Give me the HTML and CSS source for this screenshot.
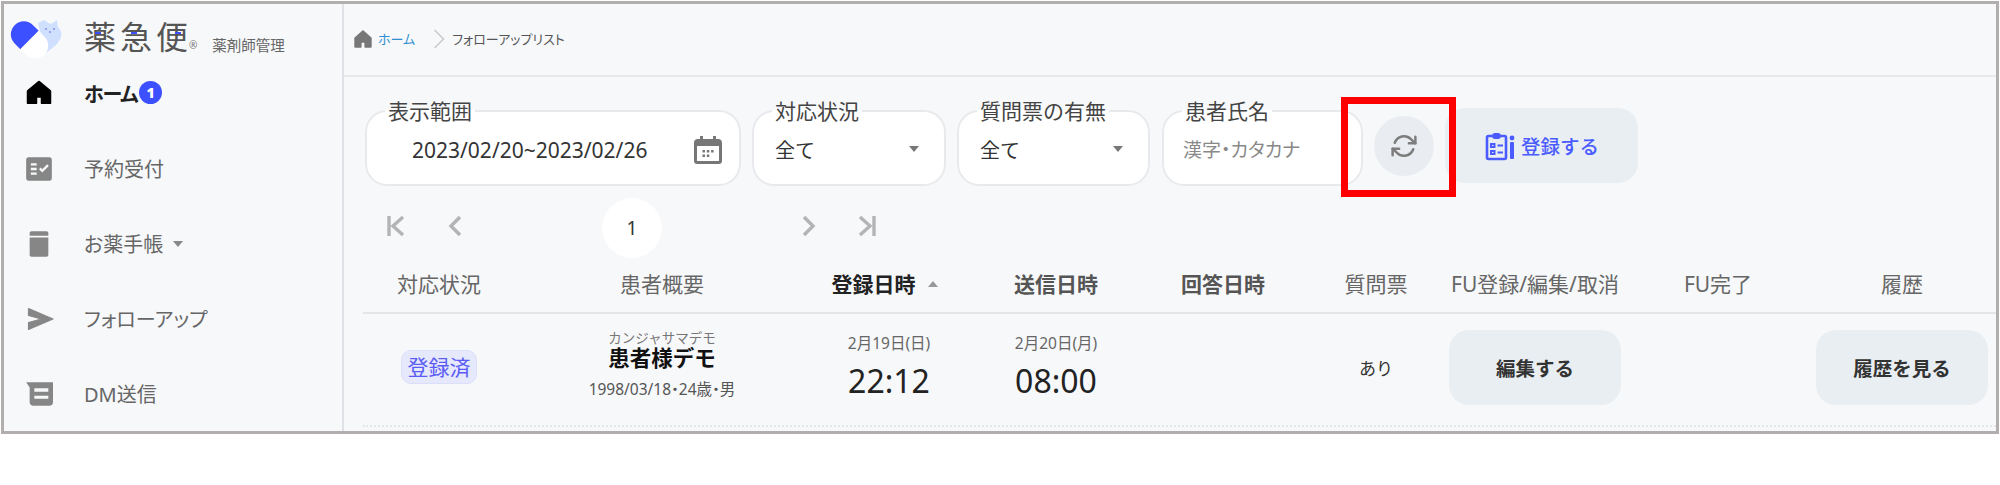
FILE: index.html
```html
<!DOCTYPE html>
<html lang="ja">
<head>
  <meta charset="UTF-8">
  <title>フォローアップリスト</title>
  <link rel="stylesheet" href="styles.css">
</head>
<body>
<div class="frame">

  <aside class="sidebar">
    <div class="brand">
      <svg class="brand-mark" width="56" height="44" viewBox="8 17 56 44">
        <path d="M44 20l5 3.500h3l5-3.500 1 7c3 3 4 6 3 10-2 6-8 11-15 16l-8-30z" fill="#cfdffe"/>
        <circle cx="46" cy="29" r="1" fill="#7f95f5"/>
        <circle cx="54" cy="29" r="1" fill="#7f95f5"/>
        <circle cx="50" cy="32" r="1" fill="#7f95f5"/>
        <g transform="rotate(45 29.500 40)">
          <path d="M29.500 27H21.500a13 13 0 0 0 0 26H29.500z" fill="#3d50ff"/>
          <path d="M29.500 27H37.500a13 13 0 0 1 0 26H29.500z" fill="#fff"/>
        </g>
      </svg>
      <span class="brand-name">薬急便<i class="reg">®</i><i class="dash dash-1"></i><i class="dash dash-2"></i><i class="dash dash-3"></i></span>
      <span class="brand-sub">薬剤師管理</span>
    </div>

    <a class="nav-item active">
      <svg class="nav-icon" viewBox="0 0 24 24"><path d="M12 2.500 2.500 10.500v10h7v-5.500h5v5.500h7v-10z" fill="#000" stroke="#000" stroke-width="2" stroke-linejoin="round"/></svg>
      <span>ホーム</span><b class="badge">1</b>
    </a>
    <a class="nav-item">
      <svg class="nav-icon" viewBox="0 0 24 24"><path fill-rule="evenodd" d="M21 2H3C1.900 2 1 2.900 1 4v16c0 1.100.9 2 2 2h18c1.100 0 2-.9 2-2V4c0-1.100-.9-2-2-2zM10 17H5v-2h5v2zm0-4H5v-2h5v2zm0-4H5V7h5v2zm4.820 6L12 12.160l1.410-1.410 1.410 1.420L18.990 8l1.420 1.420L14.820 15z" fill="#868686"/></svg>
      <span>予約受付</span>
    </a>
    <a class="nav-item">
      <svg class="nav-icon" viewBox="0 0 24 24"><path fill-rule="evenodd" d="M5.500 1h13c.8 0 1.500.7 1.500 1.500v19c0 .8-.7 1.500-1.500 1.500h-13c-.8 0-1.500-.7-1.500-1.500v-19C4 1.700 4.700 1 5.500 1zM4 5v1.500h16V5z" fill="#868686"/></svg>
      <span>お薬手帳</span><i class="nav-caret"></i>
    </a>
    <a class="nav-item">
      <svg class="nav-icon" viewBox="0 0 24 24"><path d="M3 3 24 12 3 21v-6l11-3-11-3z" fill="#868686" stroke="#868686" stroke-linejoin="round"/></svg>
      <span>フォローアップ</span>
    </a>
    <a class="nav-item">
      <svg class="nav-icon" viewBox="0 0 24 24"><path fill-rule="evenodd" d="M1 2h23v17c0 1.700-1.300 3-3 3H7c-1.700 0-3-1.300-3-3V6.500zM8 7v3h12V7zm0 6.500V16h12v-2.500z" fill="#868686"/></svg>
      <span>DM送信</span>
    </a>
  </aside>

  <main class="main">
    <div class="crumbs">
      <svg class="crumb-home" viewBox="0 0 24 24"><path d="M12 3.500 3.500 11v9.500h6v-5.500h5v5.500h6V11z" fill="#777" stroke="#777" stroke-width="2" stroke-linejoin="round"/></svg>
      <span class="crumb-link">ホーム</span>
      <svg class="crumb-sep" viewBox="0 0 12 22"><path d="M1.500 2 10.500 11 1.500 20" fill="none" stroke="#c9c9c9" stroke-width="1.500"/></svg>
      <span class="crumb-now">フォローアップリスト</span>
    </div>

    <div class="filters">
      <fieldset class="field field-date">
        <legend>表示範囲</legend>
        <div class="field-body">
          <span class="date-value">2023/02/20~2023/02/26</span>
          <svg class="cal-icon" viewBox="0 0 28 28"><path fill-rule="evenodd" d="M6 0h3v3h10V0h3v3h2.500C26.400 3 28 4.600 28 6.500V25c0 1.700-1.300 3-3 3H3c-1.700 0-3-1.300-3-3V6.500C0 4.600 1.600 3 3.500 3H6zM3 10v15h22V10z" fill="#777"/><path d="M8.500 14h2.500v2.500H8.500zm4.300 0h2.500v2.500h-2.500zm4.300 0h2.500v2.500h-2.500zm-8.600 4.500h2.500V21H8.500zm4.300 0h2.500V21h-2.500z" fill="#777"/></svg>
        </div>
      </fieldset>
      <fieldset class="field field-status">
        <legend>対応状況</legend>
        <div class="field-body"><span>全て</span><i class="select-caret"></i></div>
      </fieldset>
      <fieldset class="field field-question">
        <legend>質問票の有無</legend>
        <div class="field-body"><span>全て</span><i class="select-caret"></i></div>
      </fieldset>
      <fieldset class="field field-name">
        <legend>患者氏名</legend>
        <div class="field-body"><span class="placeholder">漢字・カタカナ</span></div>
      </fieldset>

      <button class="refresh">
        <svg width="26" height="26" viewBox="0 0 24 24" fill="none" stroke="#7d7d7d" stroke-width="2.300" stroke-linecap="round" stroke-linejoin="round"><path d="M22.500 3.500v6h-6"/><path d="M1.500 20.500v-6h6"/><path d="M3.500 9a9 9 0 0 1 14.900-3.400l4.100 3.900"/><path d="M1.500 14.500l4.100 3.900A9 9 0 0 0 20.500 15"/></svg>
        <span class="highlight"></span>
      </button>

      <button class="register">
        <svg width="30" height="30" viewBox="0 0 30 30" fill="none" stroke="#4a5cff" stroke-width="2.600"><path d="M7 5H3.500C2.500 5 2 5.500 2 6.500v20c0 1 .5 1.500 1.500 1.500h16c1 0 1.500-.5 1.500-1.500v-20c0-1-.5-1.500-1.500-1.500H16"/><rect x="7" y="2" width="9" height="6" rx="3" fill="#4a5cff" stroke="none"/><path d="M6 13h3.500v3H6zM6 20h3.500v3H6zM12.500 14.500H18M12.500 21.500H18" stroke-width="2"/><circle cx="27" cy="7" r="2.400" fill="#4a5cff" stroke="none"/><rect x="25" y="11" width="4" height="17" rx="1" fill="#4a5cff" stroke="none"/></svg>
        <span>登録する</span>
      </button>
    </div>

    <div class="pager">
      <svg class="pg pg-first" viewBox="0 0 18 22"><path d="M2 1v20M16 2 6 11l10 9" fill="none" stroke="#b4b4b4" stroke-width="3.400"/></svg>
      <svg class="pg pg-prev" viewBox="0 0 14 22"><path d="M12 2 3 11l9 9" fill="none" stroke="#b4b4b4" stroke-width="3.400"/></svg>
      <span class="pg-num">1</span>
      <svg class="pg pg-next" viewBox="0 0 14 22"><path d="M2 2l9 9-9 9" fill="none" stroke="#b4b4b4" stroke-width="3.400"/></svg>
      <svg class="pg pg-last" viewBox="0 0 18 22"><path d="M16 1v20M2 2l10 9-10 9" fill="none" stroke="#b4b4b4" stroke-width="3.400"/></svg>
    </div>

    <div class="table">
      <div class="row head">
        <div>対応状況</div>
        <div>患者概要</div>
        <div class="sorted">登録日時<i class="sort-caret"></i></div>
        <div class="strong">送信日時</div>
        <div class="strong">回答日時</div>
        <div>質問票</div>
        <div>FU登録/編集/取消</div>
        <div>FU完了</div>
        <div class="last">履歴</div>
      </div>
      <div class="row body">
        <div><span class="chip">登録済</span></div>
        <div class="patient">
          <span class="kana">カンジャサマデモ</span>
          <span class="pname">患者様デモ</span>
          <span class="dob">1998/03/18・24歳・男</span>
        </div>
        <div class="stamp"><span class="day">2月19日(日)</span><span class="time">22:12</span></div>
        <div class="stamp"><span class="day">2月20日(月)</span><span class="time">08:00</span></div>
        <div></div>
        <div class="has-q">あり</div>
        <div><button class="btn">編集する</button></div>
        <div></div>
        <div class="last"><button class="btn">履歴を見る</button></div>
      </div>
    </div>
  </main>

</div>
</body>
</html>
```

FILE: styles.css
```css
* {
  box-sizing: border-box;
}
body {
  margin: 0;
  background: #fff;
  font-family: "Noto Sans", "Noto Sans CJK JP", sans-serif;
  color: #333;
}
button {
  font-family: inherit;
  border: none;
  cursor: pointer;
}
.frame {
  display: flex;
  width: 1998px;
  height: 433px;
  margin: 1px;
  border: 3px solid #b3aeae;
  background: #f7f8fa;
  overflow: hidden;
}

/* sidebar */
.sidebar {
  flex: none;
  width: 340px;
  border-right: 2px solid #dfe1e6;
}
.brand {
  display: flex;
  align-items: flex-start;
  height: 52px;
  padding: 13px 0 0 4px;
}
.brand-mark {
  flex: none;
  margin-right: 20px;
}
.brand-name {
  position: relative;
  font-size: 32px;
  line-height: 40px;
  letter-spacing: 4px;
  color: #555;
  font-weight: 400;
  white-space: nowrap;
}
.reg {
  font-size: 10px;
  font-style: normal;
  letter-spacing: 0;
  margin-left: -3px;
  color: #777;
}
.dash {
  position: absolute;
  top: 15px;
  width: 6px;
  height: 2px;
  background: #3d50ff;
}
.dash-1 {
  left: 11px;
}
.dash-2 {
  left: 47px;
}
.dash-3 {
  left: 91px;
}
.brand-sub {
  font-size: 14.500px;
  line-height: 20px;
  margin: 18px 0 0 15px;
  color: #666;
}
.nav-item {
  display: flex;
  align-items: center;
  height: 75px;
  padding-left: 20px;
  font-size: 20px;
  font-feature-settings: "palt";
  color: #666;
}
.nav-item.active {
  color: #222;
  font-weight: 700;
  letter-spacing: -1.300px;
}
.nav-icon {
  flex: none;
  width: 30px;
  height: 28px;
  margin-right: 30px;
}
.active .nav-icon {
  margin-top: -2px;
}
.badge {
  width: 23px;
  height: 23px;
  margin: -3px 0 0 2px;
  border-radius: 50%;
  background: #3d50ff;
  color: #fff;
  font-size: 14px;
  line-height: 23px;
  text-align: center;
  letter-spacing: 0;
}
.nav-caret {
  margin-left: 10px;
  border: 5px solid transparent;
  border-top: 6px solid #888;
  border-bottom: none;
}

/* main */
.main {
  flex: 1;
  min-width: 0;
  padding-left: 19px;
}
.crumbs {
  display: flex;
  align-items: center;
  height: 73px;
  margin-left: -19px;
  padding: 0 0 2px 8px;
  border-bottom: 2px solid #e6e8ec;
  font-size: 13px;
  font-feature-settings: "palt";
}
.crumb-home {
  width: 22px;
  height: 22px;
  margin-right: 4px;
}
.crumb-link {
  color: #2f8fd0;
}
.crumb-sep {
  width: 12px;
  height: 22px;
  margin: 0 7px 0 18px;
}
.crumb-now {
  color: #555;
}

/* filters */
.filters {
  display: flex;
  align-items: flex-start;
  gap: 11px;
  margin: 22px 0 0 2px;
}
.field {
  height: 87px;
  margin: 0;
  padding: 0 27px 0 21px;
  border: 2px solid #e8e9ec;
  border-radius: 22px;
  background: #fff;
  min-width: 0;
}
.field legend {
  margin-left: -3px;
  padding: 0 3px;
  font-size: 21px;
  line-height: 24px;
  color: #444;
}
.field-date {
  width: 376px;
}
.field-status {
  width: 194px;
}
.field-question {
  width: 193px;
}
.field-name {
  width: 201px;
  margin-left: 1px;
}
.field-body {
  display: flex;
  align-items: center;
  justify-content: space-between;
  height: 52px;
  font-size: 20px;
  color: #333;
}
.date-value {
  margin: 2px 0 0 24px;
  font-size: 21px;
}
.cal-icon {
  width: 28px;
  height: 28px;
  margin: 2px -10px 0 0;
}
.select-caret {
  margin-right: -2px;
  border: 5px solid transparent;
  border-top: 6px solid #777;
  border-bottom: none;
}
.placeholder {
  margin-left: -2px;
  font-size: 19px;
  font-feature-settings: "palt";
  color: #888;
}
.refresh {
  position: relative;
  display: flex;
  align-items: center;
  justify-content: center;
  width: 60px;
  height: 60px;
  margin-top: 17px;
  padding: 0;
  border-radius: 50%;
  background: #e9edf1;
}
.highlight {
  position: absolute;
  left: -33px;
  top: -19px;
  width: 115px;
  height: 100px;
  border: 7px solid #ff0000;
}
.register {
  display: flex;
  align-items: center;
  gap: 6px;
  width: 193px;
  height: 75px;
  margin-top: 9px;
  padding: 0 0 0 40px;
  border-radius: 20px;
  background: #e9eef2;
  color: #4a5cff;
  font-size: 19.500px;
  font-weight: 500;
}

/* pager */
.pager {
  display: flex;
  align-items: center;
  height: 60px;
  margin-top: 12px;
  padding-left: 24px;
}
.pg {
  flex: none;
  height: 24px;
  margin-top: -4px;
}
.pg-first {
  width: 18px;
}
.pg-prev {
  width: 14px;
  margin-left: 43px;
}
.pg-num {
  flex: none;
  width: 60px;
  height: 60px;
  margin-left: 140px;
  border-radius: 50%;
  background: #fff;
  font-size: 19px;
  line-height: 60px;
  text-align: center;
  color: #333;
}
.pg-next {
  width: 14px;
  margin-left: 140px;
}
.pg-last {
  width: 18px;
  margin-left: 42px;
}

/* table */
.row {
  display: grid;
  grid-template-columns: 152px 294px 160px 174px 160px 146px 172px 194px 182px;
  align-items: center;
  text-align: center;
}
.last {
  padding-right: 8px;
}
.head {
  height: 56px;
  padding-bottom: 5px;
  border-bottom: 2px solid #e4e5e9;
  font-size: 21px;
  color: #666;
}
.head .strong {
  color: #555;
  font-weight: 700;
}
.sorted {
  color: #222;
  font-weight: 700;
}
.sort-caret {
  display: inline-block;
  margin: 0 9px 4px 12px;
  vertical-align: middle;
  border: 5px solid transparent;
  border-bottom: 6px solid #999;
  border-top: none;
}
.body {
  height: 113px;
  padding-bottom: 5px;
  border-bottom: 2px dotted #e4e5e9;
}
.chip {
  display: inline-block;
  width: 76px;
  border: 1px solid #dcdffa;
  border-radius: 10px;
  background: #e6e8fb;
  color: #5a5cf5;
  font-size: 21px;
  line-height: 32px;
}
.patient {
  padding-bottom: 5px;
}
.patient span {
  display: block;
}
.kana {
  font-size: 13.500px;
  line-height: 15px;
  color: #777;
}
.pname {
  font-size: 21.500px;
  line-height: 24px;
  font-weight: 700;
  color: #111;
}
.dob {
  margin-top: 9px;
  font-size: 15.500px;
  line-height: 20px;
  font-feature-settings: "palt";
  color: #555;
}
.stamp {
  padding-bottom: 1px;
}
.stamp span {
  display: block;
}
.day {
  font-size: 15.500px;
  line-height: 20px;
  color: #666;
}
.time {
  margin-top: 8px;
  font-size: 32px;
  line-height: 40px;
  color: #222;
}
.has-q {
  font-size: 17px;
  color: #333;
}
.btn {
  width: 172px;
  height: 75px;
  border-radius: 20px;
  background: #e9eef2;
  color: #333;
  font-size: 19.500px;
  font-weight: 700;
}
```
